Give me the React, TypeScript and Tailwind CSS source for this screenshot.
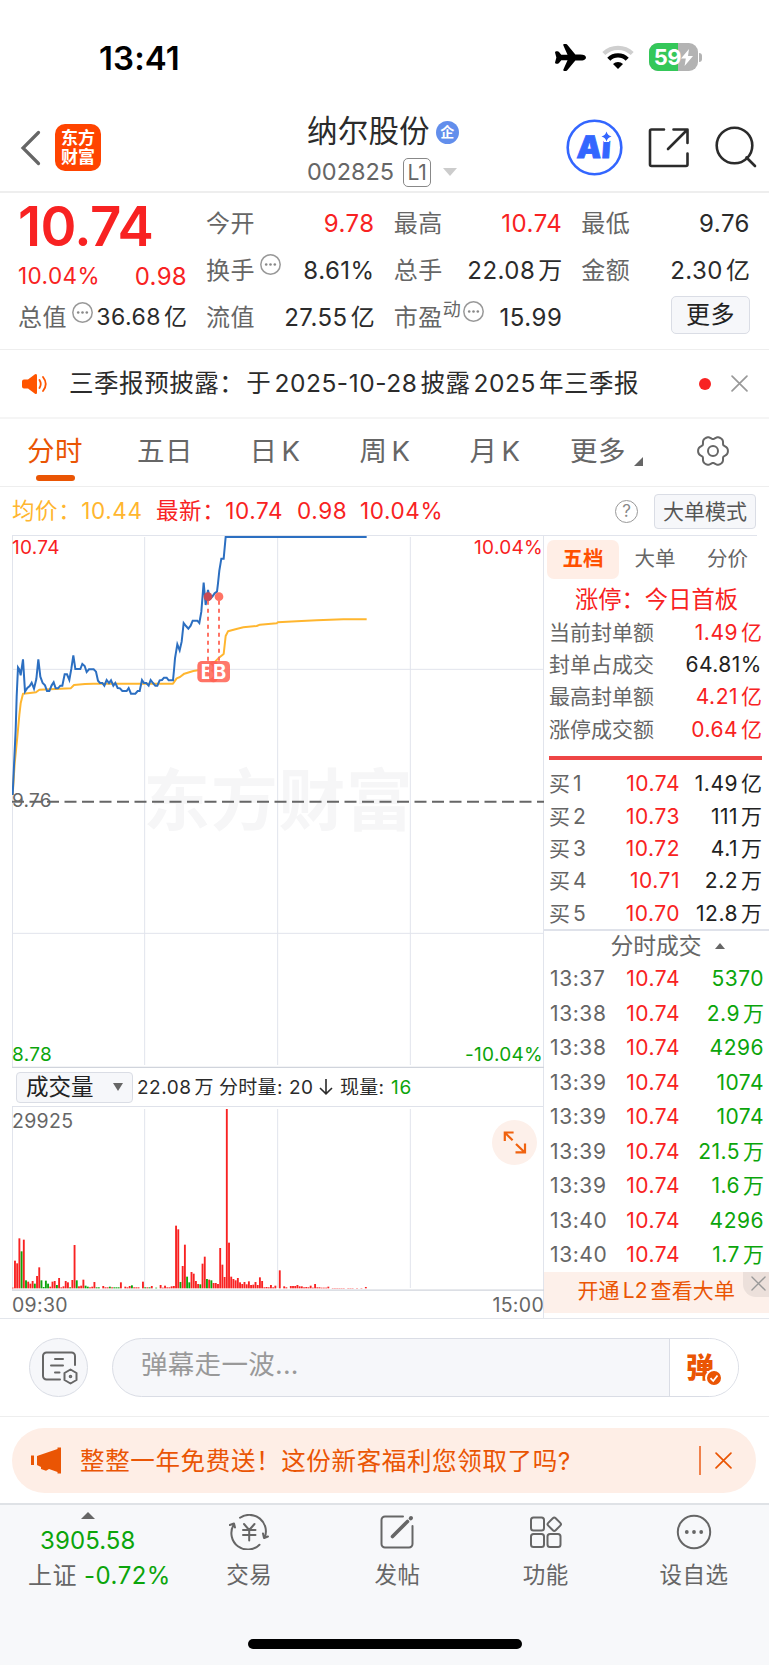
import type { ReactNode } from "react";
import clsx from "clsx";
import { IoAirplane } from "react-icons/io5";

const UNIT = /^(.*?)([亿万])$/;

// Numbers keep a small gap before their 亿 / 万 unit.
function Qty({ value, className }: { value: string; className?: string }) {
    const m = value.match(UNIT);
    return (
        <span className={clsx("tracking-[0.5px] whitespace-nowrap", className)}>
            {m ? m[1] : value}
            {m ? <span className="ml-[3px] tracking-normal">{m[2]}</span> : null}
        </span>
    );
}

function InfoDots() {
    return (
        <svg width="21" height="21" viewBox="0 0 21 21" className="shrink-0" fill="none">
            <circle cx="10.5" cy="10.5" r="9.7" stroke="#999" strokeWidth="1.5" />
            <circle cx="6.2" cy="10.5" r="1.3" fill="#888" />
            <circle cx="10.5" cy="10.5" r="1.3" fill="#888" />
            <circle cx="14.8" cy="10.5" r="1.3" fill="#888" />
        </svg>
    );
}

function Cross({ size, color, width = 1.6 }: { size: number; color: string; width?: number }) {
    return (
        <svg width={size} height={size} viewBox="0 0 16 16" fill="none" stroke={color} strokeWidth={width} strokeLinecap="round">
            <path d="M1 1 15 15M15 1 1 15" />
        </svg>
    );
}

function StatusBar() {
    return (
        <div className="flex h-[104px] items-start pt-[43px] pl-[99px]">
            <div className="w-[455px] text-[33px] leading-[30px] font-semibold tracking-[0.1px] text-black">13:41</div>
            <IoAirplane className="mt-[-2px] h-[33px] w-[33px] text-black" />
            <svg width="32" height="26" viewBox="0 0 32 26" className="mt-[1px] ml-[15px]" fill="none">
                <path d="M1.8 9.6A20.3 20.3 0 0 1 30.2 9.6" stroke="#cfcfcf" strokeWidth="4.2" />
                <path d="M6.8 15.2A13 13 0 0 1 25.2 15.2" stroke="#000" strokeWidth="4.4" />
                <path d="M16 25 11 20A7.2 7.2 0 0 1 21 20Z" fill="#000" />
            </svg>
            <div className="ml-[15px] flex items-center">
                <div className="relative flex h-[28px] w-[49px] items-center justify-center overflow-hidden rounded-[9px] bg-[#b3b3b3]">
                    <div className="absolute inset-y-0 left-0 w-[29px] bg-[#34c759]" />
                    <span className="relative text-[22px] leading-none font-bold tracking-[-0.5px] text-white">59</span>
                    <svg width="12" height="17" viewBox="0 0 12 17" className="relative">
                        <path d="M8 0 0 9.6h4.8L3.6 17 12 7H7Z" fill="#fff" />
                    </svg>
                </div>
                <div className="ml-[1px] h-[9px] w-[3px] rounded-r-full bg-[#b3b3b3]" />
            </div>
        </div>
    );
}

function Header() {
    return (
        <div className="flex h-[89px] items-start border-b-2 border-[#eee] pl-[20px]">
            <svg width="21" height="36" viewBox="0 0 21 36" className="mt-[26px]" fill="none">
                <path d="M18.5 2.5 3 18 18.5 33.5" stroke="#666" strokeWidth="3.2" strokeLinecap="round" />
            </svg>
            <div className="mt-[20px] ml-[14px] flex h-[47px] w-[46px] flex-col items-center justify-center rounded-[10px] bg-[#ff4400] text-[17px] leading-[19px] font-bold text-white">
                <span>东方</span>
                <span>财富</span>
            </div>
            <div className="mt-[10px] ml-[206px] w-[259px]">
                <div className="flex h-[34px] items-center">
                    <span className="text-[30.5px] leading-none tracking-[0.2px] text-[#2b2b2b]">纳尔股份</span>
                    <span className="mt-[2px] ml-[6px] flex h-[23px] w-[23px] items-center justify-center rounded-full bg-[#628eec] text-[14px] leading-none font-bold text-white">
                        企
                    </span>
                </div>
                <div className="mt-[9px] flex h-[30px] items-center">
                    <span className="text-[23.5px] leading-none text-[#666]">002825</span>
                    <span className="ml-[9px] flex h-[29px] w-[28px] items-center justify-center rounded-[5px] border-[1.5px] border-[#888] text-[21px] leading-none text-[#666]">
                        L1
                    </span>
                    <svg width="14" height="8" viewBox="0 0 14 8" className="ml-[12px]">
                        <path d="M0 0H14L7 8Z" fill="#ccc" />
                    </svg>
                </div>
            </div>
            <svg width="57" height="57" viewBox="0 0 57 57" className="mt-[15px]">
                <circle cx="28.5" cy="28.5" r="26.8" fill="none" stroke="#3366ff" strokeWidth="2.6" />
                <text x="10.5" y="39" fontSize="31" fontWeight="900" fill="#3366ff" stroke="#3366ff" strokeWidth=".8" transform="skewX(-4) translate(2.5 0)">
                    Ai
                </text>
                <path d="M40.5 12.5Q41.5 16.5 45.5 17.5 41.5 18.5 40.5 22.5 39.5 18.5 35.5 17.5 39.5 16.5 40.5 12.5Z" fill="#3366ff" stroke="#fff" strokeWidth="5" paintOrder="stroke" />
            </svg>
            <svg width="42" height="42" viewBox="0 0 42 42" className="mt-[23px] ml-[25px]" fill="none" stroke="#2b2b2b" strokeWidth="2.6" strokeLinecap="round" strokeLinejoin="round">
                <path d="M16 2.5H3.5A1.5 1.5 0 0 0 2 4V37.5A1.5 1.5 0 0 0 3.5 39H38A1.5 1.5 0 0 0 39.5 37.5V26.5M25.5 2.5H39.5V16M39 3 20 22" />
            </svg>
            <svg width="44" height="44" viewBox="0 0 44 44" className="mt-[21px] ml-[24px]" fill="none" stroke="#2b2b2b" strokeWidth="2.6" strokeLinecap="round">
                <circle cx="20.5" cy="20.5" r="17.8" />
                <path d="M32.5 32.5 41 41" />
            </svg>
        </div>
    );
}

function QuoteCell({ label, value, red, children }: { label: string; value: string; red?: boolean; children?: ReactNode }) {
    return (
        <div className="flex h-[47px] items-center">
            <span className="tracking-[0.5px] text-[#666]">{label}</span>
            {children}
            <Qty value={value} className={clsx("ml-auto", red ? "text-[#f82222]" : "text-[#2b2b2b]")} />
        </div>
    );
}

function Quote() {
    return (
        <div className="flex h-[157px] border-b border-[#eee] pt-[7px] pl-[18px] text-[24px] leading-none">
            <div className="w-[169px]">
                <div className="h-[53px] pt-[5px] text-[54.5px] leading-[42px] font-semibold tracking-[-0.6px] text-[#f82222]">10.74</div>
                <div className="flex h-[47px] items-center justify-between text-[#f82222]">
                    <span className="text-[22.5px] tracking-[0.4px]">10.04%</span>
                    <span className="tracking-[0.3px]">0.98</span>
                </div>
                <div className="flex h-[35px] items-center">
                    <span className="tracking-[0.5px] text-[#666]">总值</span>
                    <span className="mb-[10px] ml-[5px]">
                        <InfoDots />
                    </span>
                    <Qty value="36.68亿" className="ml-auto text-[23px] text-[#2b2b2b]" />
                </div>
            </div>
            <div className="ml-[19px] grid w-[544px] grid-cols-3 content-start gap-x-[19px]">
                <QuoteCell label="今开" value="9.78" red />
                <QuoteCell label="最高" value="10.74" red />
                <QuoteCell label="最低" value="9.76" />
                <QuoteCell label="换手" value="8.61%">
                    <span className="mb-[12px] ml-[5px]">
                        <InfoDots />
                    </span>
                </QuoteCell>
                <QuoteCell label="总手" value="22.08万" />
                <QuoteCell label="金额" value="2.30亿" />
                <QuoteCell label="流值" value="27.55亿" />
                <QuoteCell label="市盈" value="15.99">
                    <span className="mb-[16px] text-[18px] text-[#666]">动</span>
                    <span className="mb-[12px] ml-[2px]">
                        <InfoDots />
                    </span>
                </QuoteCell>
                <div className="mt-[2px] flex h-[38px] w-[79px] items-center justify-center justify-self-end rounded-[5px] border border-[#dadde5] bg-[#f6f7fa] tracking-[0.5px] text-[#222]">
                    更多
                </div>
            </div>
        </div>
    );
}

function Notice() {
    return (
        <div className="flex h-[69px] items-center border-b-2 border-[#f5f5f5] pl-[21px] text-[24.5px] leading-none text-[#2b2b2b]">
            <svg width="27" height="22" viewBox="0 0 27 22" fill="none">
                <path d="M1 8.5A2 2 0 0 1 3 6.5H7L14 1.2Q16 .2 16 2.5V19.5Q16 21.8 14 20.8L7 15.5H3A2 2 0 0 1 1 13.5Z" fill="#ff5500" />
                <path d="M18.5 7Q21 11 18.5 15M22 4Q27.5 11 22 18" stroke="#ff5500" strokeWidth="1.8" strokeLinecap="round" />
            </svg>
            <span className="ml-[21px] w-[630px] tracking-[0.55px] whitespace-nowrap">
                三季报预披露：<span className="ml-[2px]">于</span>
                <span className="mr-[3px] ml-[3px]">2025-10-28</span>披露<span className="mr-[3px] ml-[3px]">2025</span>年三季报
            </span>
            <span className="h-[12px] w-[12px] rounded-full bg-[#f82222]" />
            <span className="ml-[20px]">
                <Cross size={17} color="#999" />
            </span>
        </div>
    );
}

const TABS = [["分时"], ["五日"], ["日", "K"], ["周", "K"], ["月", "K"]];

// Six-lobed cog outline around (16, 16).
const COG = Array.from({ length: 120 }, (_, i) => {
    const a = (i * Math.PI) / 60;
    const r = 13.7 + 1.5 * Math.cos(6 * a) - 0.3 * Math.cos(12 * a);
    return `${(16 + r * Math.cos(a)).toFixed(2)},${(16 + r * Math.sin(a)).toFixed(2)}`;
}).join(" ");

function PeriodTabs() {
    return (
        <div className="flex h-[68px] items-center border-b border-[#eee] text-[27.5px] leading-none tracking-[0.4px] text-[#666]">
            {TABS.map(([text, latin], i) => (
                <div key={text} className={clsx("flex h-full w-[110px] flex-col items-center pt-[19px]", i === 0 && "text-[#ea5504]")}>
                    <span className="h-[27px]">
                        {text}
                        {latin ? <span className="ml-[4px]">{latin}</span> : null}
                    </span>
                    {i === 0 ? <span className="mt-[10px] h-[6px] w-[39px] rounded-full bg-[#ea5504]" /> : null}
                </div>
            ))}
            <div className="ml-[20px] flex h-full w-[127px] items-start pt-[19px]">
                更多
                <svg width="9" height="9" viewBox="0 0 9 9" className="mt-[19px] ml-[8px]">
                    <path d="M9 0V9H0Z" fill="#666" />
                </svg>
            </div>
            <svg width="32" height="32" viewBox="0 0 32 32" className="mb-[3px]" fill="none" stroke="#666" strokeWidth="2">
                <polygon points={COG} strokeLinejoin="round" />
                <circle cx="16" cy="16" r="5" />
            </svg>
        </div>
    );
}

function AverageRow() {
    return (
        <div className="flex h-[48px] items-center pl-[12px] text-[22.5px] leading-none tracking-[0.6px] text-[#f82222]">
            <span className="w-[144px] text-[#ffb62f]">
                均价：<span>10.44</span>
            </span>
            <span className="w-[141px]">最新：10.74</span>
            <span className="w-[63px]">0.98</span>
            <span>10.04%</span>
            <span className="ml-auto flex h-[23px] w-[23px] items-center justify-center rounded-full border-[1.5px] border-[#999] text-[17px] tracking-normal text-[#888]">
                ?
            </span>
            <span className="mr-[13px] ml-[16px] flex h-[35px] w-[102px] items-center justify-center rounded-[4px] border border-[#dadde5] bg-[#f6f7fa] text-[21px] tracking-normal text-[#555]">
                大单模式
            </span>
        </div>
    );
}

const PRICE =
    "38,795 40,750 47,600 50,500 54,412 58,418 62,436 69,388 75,485 82,474 89,468 95,458 102,476 109,447 115,388 121,440 128,459 135,466 141,483 148,483 155,466 161,457 167,475 174,475 181,467 187,467 194,433 201,433 208,450 214,416 220,376 226,417 241,417 247,402 254,408 260,426 267,418 281,418 288,425 294,452 300,459 307,459 313,467 320,450 327,459 333,451 340,467 346,459 353,474 360,475 367,483 380,483 386,474 393,491 406,491 413,483 419,483 426,450 432,459 439,459 446,467 452,450 459,459 466,467 472,467 479,451 486,450 492,443 500,443 506,451 519,451 522,420 525,385 532,343 539,361 545,335 551,279 558,288 565,296 572,287 578,272 592,272 598,279 604,245 611,158 617,225 624,180 630,207 637,200 644,190 651,185 654,160 658,122 664,86 671,86 677,21 1100,21";
const AVERAGE =
    "38,795 44,700 52,620 58,555 62,520 69,491 90,489 108,487 118,479 150,478 212,475 222,465 255,462 280,461 519,461 530,445 540,441 553,431 580,423 598,420 612,405 640,400 655,385 671,372 677,318 684,304 712,296 730,292 770,288 780,284 830,280 833,277 890,274 950,271 1030,268 1100,268";

function PriceChart() {
    return (
        <div className="relative h-[533px] w-[532px]">
            <svg width="532" height="533" viewBox="36 15 1596 1599" className="block" fill="none">
                <text x="430" y="885" fontSize="200" fontWeight="700" fill="#f6f6f7" textLength="808">
                    东方财富
                </text>
                <g stroke="#e1e4ec" strokeWidth="3">
                    <path d="M36 16.5H1632M37.5 15V1614M434 21V1605M833 21V1605M1231 21V1605M36 418H1632M36 1210H1632" />
                </g>
                <path d="M36 1612H1632" stroke="#d0d4dc" strokeWidth="4" />
                <path d="M36 815H1632" stroke="#666" strokeWidth="6" strokeDasharray="36 16.5" />
                <polyline points={AVERAGE} stroke="#ffb62f" strokeWidth="6" strokeLinejoin="round" />
                <polyline points={PRICE} stroke="#2c6fc1" strokeWidth="6" />
                <path d="M624 212V395M657 212V395" stroke="#ff7365" strokeWidth="6" strokeDasharray="12 12" />
                <circle cx="624" cy="200" r="13" fill="#c94a55" />
                <circle cx="657" cy="200" r="13" fill="#ff7365" />
                <g fontSize="60" fontWeight="700" textAnchor="middle">
                    <rect x="592" y="393" width="62" height="64" rx="14" fill="#ff7365" />
                    <text x="622" y="446" fill="#fff">
                        B
                    </text>
                    <rect x="627" y="393" width="63" height="64" rx="14" fill="#ff6152" fillOpacity=".85" />
                    <text x="659" y="446" fill="#fff">
                        B
                    </text>
                </g>
            </svg>
            <div className="absolute inset-x-0 top-[3px] flex justify-between pr-[1px] text-[19px] leading-[19px] tracking-[0.3px] text-[#f82222]">
                <span>10.74</span>
                <span>10.04%</span>
            </div>
            <div className="absolute top-[256px] left-0 text-[19px] leading-[19px] tracking-[0.3px] text-[#666]">9.76</div>
            <div className="absolute inset-x-0 bottom-[4px] flex justify-between pr-[1px] text-[19px] leading-[19px] tracking-[0.3px] text-[#0ba50b]">
                <span>8.78</span>
                <span>-10.04%</span>
            </div>
        </div>
    );
}

// Minute volume, one entry per minute; negative entries are down ticks.
const VOLUME = [
    2, 83, 75, 150, -111, 146, -24, 20, 14, 22, -14, 37, 63, -24, -4, -23, -14, 5, 20, 22, -10, 31, 3, 6, 22, 18, -3, 25, 130, -24, 6, 8, 26, -8,
    -5, 3, 5, 19, -3, -3, 0, 7, 3, 3, -5, 3, -3, -3, -3, 18, 0, 5, 3, 7, -9, 3, 3, 3, 0, 20, -3, 3, -3, 7, 0, -2, 0, 10, 2, 8, 3, 3, 6, 7, 188, 177,
    -19, 67, 131, -35, -18, 49, 44, 22, 13, -12, 74, 95, -28, 26, -24, 16, 16, 13, 121, 71, 34, 538, 137, 35, 28, 24, 31, 18, 13, 19, 12, 21, 10,
    11, 19, 10, 33, 22, 3, 4, 3, 10, 3, 8, 0, 54, 0, 6, 3, 0, 7, 7, 7, 10, 6, 6, 3, 4, 3, 8, 2, 13, 3, 3, 2, 2, 2, 5, 0, 1, 1, 1, 1, 1, 1, 0, 1, 1, 1,
    0, 1, 0, 1, 0, 4,
];

function VolumeChart() {
    return (
        <div className="relative h-[184px]">
            <svg width="532" height="184" viewBox="36 141 1596 552" className="block" fill="none">
                <path d="M37.5 141V690M434 147V684M833 147V684M1231 147V684" stroke="#e1e4ec" strokeWidth="3" />
                {VOLUME.map((v, i) => (
                    <rect key={i} x={38.5 + i * 6.62 - 3} y={685 - Math.abs(v)} width="5.6" height={Math.abs(v)} fill={v < 0 ? "#0ba50b" : "#f82222"} />
                ))}
                <path d="M36 690.5H1632" stroke="#d0d4dc" strokeWidth="4" />
            </svg>
            <span className="absolute top-[5px] left-0 text-[19.5px] leading-[19px] tracking-[0.3px] text-[#666]">29925</span>
            <svg width="45" height="45" viewBox="0 0 45 45" className="absolute top-[13px] right-[7px]" fill="none" stroke="#f0620f" strokeWidth="2.2">
                <circle cx="22.5" cy="22.5" r="22.5" fill="#fdf0ea" stroke="none" />
                <path d="M21.6 12.5H12.8V21M13 12.7 20.6 20.3M33 23.6V32.3H23.5M32.6 32.2 24 24" />
            </svg>
        </div>
    );
}

function Charts() {
    return (
        <div className="w-[532px] leading-none">
            <PriceChart />
            <div className="flex h-[39px] items-center border-b border-[#dfe2ea] pl-[4px] text-[19px] whitespace-nowrap text-[#2b2b2b]">
                <span className="flex h-[31px] w-[117px] items-center rounded-[4px] border border-[#dadde5] bg-[#f6f7fa] pl-[9px] text-[22.5px] text-[#222]">
                    成交量
                    <svg width="10" height="8" viewBox="0 0 10 8" className="ml-[19px]">
                        <path d="M0 0H10L5 8Z" fill="#666" />
                    </svg>
                </span>
                <Qty value="22.08万" className="ml-[4px] w-[82px]" />
                <span className="w-[70px] tracking-[0.3px]">分时量:</span>
                <span className="w-[30px] tracking-[0.3px]">20</span>
                <svg width="14" height="16" viewBox="0 0 14 16" className="mr-[7px]" fill="none" stroke="#2b2b2b" strokeWidth="1.6">
                    <path d="M7 0V14.5M1 9 7 14.8 13 9" />
                </svg>
                <span className="w-[51px] tracking-[0.3px]">现量:</span>
                <span className="tracking-[0.8px] text-[#0ba50b]">16</span>
            </div>
            <VolumeChart />
            <div className="flex h-[28px] items-center justify-between pt-[2px] text-[19.5px] tracking-[0.3px] text-[#666]">
                <span>09:30</span>
                <span>15:00</span>
            </div>
        </div>
    );
}

const SEAL = [
    { label: "当前封单额", value: "1.49亿", red: true },
    { label: "封单占成交", value: "64.81%", red: false },
    { label: "最高封单额", value: "4.21亿", red: true },
    { label: "涨停成交额", value: "0.64亿", red: true },
];

const BIDS = [
    ["10.74", "1.49亿"],
    ["10.73", "111万"],
    ["10.72", "4.1万"],
    ["10.71", "2.2万"],
    ["10.70", "12.8万"],
];

const TRADES = [
    ["13:37", "5370"],
    ["13:38", "2.9万"],
    ["13:38", "4296"],
    ["13:39", "1074"],
    ["13:39", "1074"],
    ["13:39", "21.5万"],
    ["13:39", "1.6万"],
    ["13:40", "4296"],
    ["13:40", "1.7万"],
];

function OrderBook() {
    return (
        <div className="ml-[-1px] flex w-[226px] flex-col border-l border-[#e1e4ec] leading-none text-[#666]">
            <div className="h-px w-[213px] bg-[#e1e4ec]" />
            <div className="mt-[4px] flex h-[39px] items-center pl-[3px] text-[20.5px]">
                <span className="flex h-full w-[72px] items-center justify-center rounded-[7px] bg-[#ffeee6] font-bold text-[#ff5000]">五档</span>
                <span className="w-[72px] text-center">大单</span>
                <span className="w-[73px] text-center">分价</span>
            </div>
            <div className="flex h-[37px] items-center justify-center pt-[5px] text-[23.3px] text-[#f82222]">涨停：今日首板</div>
            <div className="pr-[7px] pl-[5px] text-[21px]">
                {SEAL.map((row) => (
                    <div key={row.label} className="flex h-[32.4px] items-center justify-between">
                        <span>{row.label}</span>
                        <Qty value={row.value} className={row.red ? "text-[#f82222]" : "text-[#222]"} />
                    </div>
                ))}
            </div>
            <div className="mt-[10px] ml-[5px] h-[4px] w-[213px] bg-[#ee4545]" />
            <div className="mt-[8px] pr-[7px] pl-[5px] text-[21px]">
                {BIDS.map(([price, vol], i) => (
                    <div key={price} className="flex h-[32.4px] items-center">
                        <span>
                            买<span className="ml-[3px]">{i + 1}</span>
                        </span>
                        <span className="ml-auto tracking-[0.5px] text-[#f82222]">{price}</span>
                        <Qty value={vol} className="w-[82px] text-right text-[#222]" />
                    </div>
                ))}
            </div>
            <div className="mt-[-1px] h-[2px] bg-[#dfe2ea]" />
            <div className="flex h-[31px] items-center justify-center pl-[22px] text-[22.8px]">
                分时成交
                <svg width="10" height="6" viewBox="0 0 10 6" className="ml-[13px]">
                    <path d="M0 6H10L5 0Z" fill="#666" />
                </svg>
            </div>
            <div className="pr-[5px] pl-[6px] text-[21px]">
                {TRADES.map(([time, vol], i) => (
                    <div key={i} className="flex h-[34.5px] items-center">
                        <span className="tracking-[0.6px]">{time}</span>
                        <span className="ml-auto tracking-[0.5px] text-[#f82222]">10.74</span>
                        <Qty value={vol} className="w-[84px] text-right text-[#0ba50b]" />
                    </div>
                ))}
            </div>
            <div className="mt-auto mr-[-1px] mb-[5px] flex h-[41px] items-start justify-end bg-[#fdf0ea] text-[21px] text-[#ea5504]">
                <span className="mt-[8px] tracking-[0.1px] whitespace-nowrap">
                    开通<span className="mx-[3px]">L2</span>查看大单
                </span>
                <span className="ml-[8px] flex h-[25px] w-[27px] items-center justify-center rounded-bl-[13px] bg-[#ece0db] pb-[2px] pl-[3px]">
                    <Cross size={15} color="#999" width={1.4} />
                </span>
            </div>
        </div>
    );
}

function Danmaku() {
    return (
        <div className="flex h-[98px] items-center border-b border-[#eee] pl-[29px]">
            <div className="flex h-[59px] w-[59px] items-center justify-center rounded-full border border-[#dadde5] bg-[#f6f7fa]">
                <svg width="36" height="34" viewBox="0 0 36 34" className="mt-[1px] ml-[2px]" fill="none" stroke="#666" strokeWidth="2" strokeLinecap="round">
                    <path d="M18 28.5H4.5A3.5 3.5 0 0 1 1 25V5A3.5 3.5 0 0 1 4.5 1.5H29.5A3.5 3.5 0 0 1 33 5V14" />
                    <path d="M13 8H21M9 14.5H21M13 21.5H17.5" />
                    <path d="M28.5 18.5 34.5 22V29L28.5 32.5 22.5 29V22Z" strokeLinejoin="round" />
                    <circle cx="28.5" cy="25.5" r=".8" />
                </svg>
            </div>
            <div className="ml-[24px] flex h-[59px] w-[627px] overflow-hidden rounded-full border border-[#dadde5] bg-[#f6f7fa]">
                <span className="w-[556px] pt-[12px] pl-[28px] text-[26.5px] leading-none tracking-[0.3px] text-[#999]">弹幕走一波...</span>
                <div className="flex flex-1 items-center border-l border-[#dadde5] bg-white pl-[16px]">
                    <div className="relative text-[28px] leading-none font-black text-[#ea5504]">
                        弹
                        <svg width="18" height="18" viewBox="0 0 18 18" className="absolute right-[-9px] bottom-[-5px]">
                            <circle cx="9" cy="9" r="8" fill="#ea5504" stroke="#fff" strokeWidth="2" />
                            <path d="M5.5 9.2 8.2 12 12.5 6.5" fill="none" stroke="#fff" strokeWidth="1.8" />
                        </svg>
                    </div>
                </div>
            </div>
        </div>
    );
}

function Promo() {
    return (
        <div className="flex h-[86px] items-start pt-[11px] pl-[12px]">
            <div className="flex h-[65px] w-[744px] items-center rounded-full bg-[#feeee6] pl-[19px] text-[24.5px] leading-none text-[#ea5504]">
                <svg width="30" height="27" viewBox="0 0 30 27" fill="#ea5504">
                    <path d="M0 8.5H3V18H0ZM6 9 26.5 2V.5H30V26.5H26.5V25L18 22 15 23.7 10 22V20L6 18Z" />
                </svg>
                <span className="ml-[19px] w-[619px] pt-[1px] tracking-[0.65px] whitespace-nowrap">整整一年免费送！这份新客福利您领取了吗?</span>
                <span className="h-[29px] w-[2px] bg-[#f0814b]" />
                <span className="ml-[14px]">
                    <Cross size={17} color="#ea5504" />
                </span>
            </div>
        </div>
    );
}

function NavItem({ label, children }: { label: string; children: ReactNode }) {
    return (
        <div className="flex w-[148.3px] flex-col items-center">
            <svg width="40" height="36" viewBox="0 0 40 36" className="mt-[9px]" fill="none" stroke="#666" strokeWidth="2" strokeLinecap="round" strokeLinejoin="round">
                {children}
            </svg>
            <span className="mt-[14px] tracking-[0.5px]">{label}</span>
        </div>
    );
}

function BottomNav() {
    return (
        <div className="flex h-[163px] flex-col border-t-2 border-[#dfe2e6] bg-[#f7f8fa] leading-none text-[#666]">
            <div className="flex h-[134px] text-[22.5px]">
                <div className="flex w-[175px] flex-col items-start text-[24px]">
                    <svg width="14" height="7" viewBox="0 0 14 7" className="mt-[7px] ml-[81px]">
                        <path d="M0 7H14L7 0Z" fill="#666" />
                    </svg>
                    <span className="mt-[10px] ml-[40px] tracking-[0.1px] text-[#0ba50b]">3905.58</span>
                    <span className="mt-[11px] ml-[28px] tracking-[0.5px] whitespace-nowrap">
                        上证<span className="ml-[7px] text-[#0ba50b]">-0.72%</span>
                    </span>
                </div>
                <NavItem label="交易">
                    <path d="M11 3.8A16.5 16.5 0 0 1 35.5 24M39 22.5 35 24 34 19.5" />
                    <path d="M30.5 30.8A16.5 16.5 0 0 1 4.5 11M.8 11 5 9.5 6 13.5" />
                    <path d="M15 10 20.2 16 25.5 10M14 16H26.5M14 21H26.5M20.2 16V26.5" />
                </NavItem>
                <NavItem label="发帖">
                    <path d="M26 2.5H8A3.5 3.5 0 0 0 4.5 6V30A3.5 3.5 0 0 0 8 33.5H32A3.5 3.5 0 0 0 35.5 30V12" />
                    <path d="M30.5 7.5 15.5 22.5" strokeWidth="3.6" />
                    <path d="M33.7 4.3 34 4" strokeWidth="4" />
                </NavItem>
                <NavItem label="功能">
                    <rect x="5" y="3.5" width="13" height="13" rx="2.5" />
                    <rect x="5" y="20" width="13" height="13" rx="2.5" />
                    <rect x="21.5" y="20" width="13" height="13" rx="2.5" />
                    <rect x="23" y="5" width="10.5" height="10.5" rx="2" transform="rotate(45 28.25 10.25)" />
                </NavItem>
                <NavItem label="设自选">
                    <circle cx="20" cy="18" r="16.2" />
                    <g fill="#666" stroke="none">
                        <circle cx="12.8" cy="18" r="1.9" />
                        <circle cx="20" cy="18" r="1.9" />
                        <circle cx="27.2" cy="18" r="1.9" />
                    </g>
                </NavItem>
            </div>
            <div className="h-[10px] w-[274px] self-center rounded-full bg-black" />
        </div>
    );
}

export default function App() {
    return (
        <div className="h-[1665px] w-[769px] overflow-hidden bg-white font-['Inter','Noto_Sans_CJK_SC',sans-serif]">
            <StatusBar />
            <Header />
            <Quote />
            <Notice />
            <PeriodTabs />
            <AverageRow />
            <div className="flex h-[784px] border-b border-[#e3e6ec] pl-[12px]">
                <Charts />
                <OrderBook />
            </div>
            <Danmaku />
            <Promo />
            <BottomNav />
        </div>
    );
}
